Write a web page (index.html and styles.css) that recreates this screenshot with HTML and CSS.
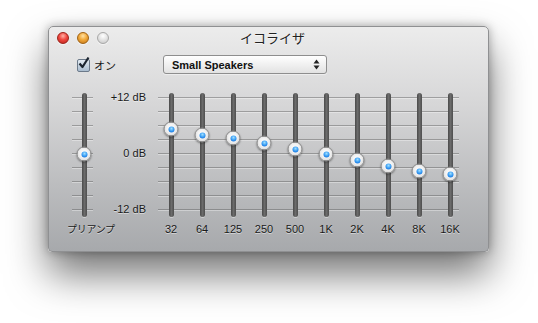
FILE: index.html
```html
<!DOCTYPE html>
<html lang="ja">
  <head>
    <meta charset="UTF-8" />
    <title>イコライザ</title>
    <link rel="stylesheet" href="styles.css">
  </head>
  <body>
    <div class="window">
      <div class="titlebar">
        <div class="lights">
          <span class="light close"></span>
          <span class="light minimize"></span>
          <span class="light zoom"></span>
        </div>
        <div class="title">イコライザ</div>
        <div></div>
      </div>

      <div class="controls">
        <label class="toggle">
          <span class="checkbox">
            <svg width="13" height="13" viewBox="0 0 13 13">
              <path d="M2.5 6.5 L5.5 10 L11.5 0.5" fill="none" stroke="#1c2530" stroke-width="2.2" stroke-linejoin="round" />
            </svg>
          </span>
          オン
        </label>
        <div class="popup">
          <span>Small Speakers</span>
          <svg width="7" height="11" viewBox="0 0 7 11">
            <path d="M3.5 0.5 L6.5 4.5 L0.5 4.5 Z" fill="#222" />
            <path d="M3.5 10.5 L6.5 6.5 L0.5 6.5 Z" fill="#222" />
          </svg>
        </div>
      </div>

      <div class="eq">
        <div class="preamp lines">
          <div class="track"><span class="knob" style="top: 61px"></span></div>
        </div>
        <div class="scale">
          <span>+12 dB</span>
          <span>0 dB</span>
          <span>-12 dB</span>
        </div>
        <div class="bands lines">
          <div class="band"><div class="track"><span class="knob" style="top: 36px"></span></div></div>
          <div class="band"><div class="track"><span class="knob" style="top: 42px"></span></div></div>
          <div class="band"><div class="track"><span class="knob" style="top: 45px"></span></div></div>
          <div class="band"><div class="track"><span class="knob" style="top: 50px"></span></div></div>
          <div class="band"><div class="track"><span class="knob" style="top: 56px"></span></div></div>
          <div class="band"><div class="track"><span class="knob" style="top: 61px"></span></div></div>
          <div class="band"><div class="track"><span class="knob" style="top: 67px"></span></div></div>
          <div class="band"><div class="track"><span class="knob" style="top: 73px"></span></div></div>
          <div class="band"><div class="track"><span class="knob" style="top: 78px"></span></div></div>
          <div class="band"><div class="track"><span class="knob" style="top: 81px"></span></div></div>
        </div>

        <div class="preamp-label">プリアンプ</div>
        <div></div>
        <div class="band-labels">
          <span>32</span>
          <span>64</span>
          <span>125</span>
          <span>250</span>
          <span>500</span>
          <span>1K</span>
          <span>2K</span>
          <span>4K</span>
          <span>8K</span>
          <span>16K</span>
        </div>
      </div>
    </div>
  </body>
</html>
```

FILE: styles.css
```css
* {
  box-sizing: border-box;
}
html,
body {
  height: 100%;
}
body {
  margin: 0;
  padding: 26px 0 0 48px;
  background: #ffffff;
  font-family: "Liberation Sans", "Noto Sans CJK JP", sans-serif;
  font-size: 11px;
  color: #1a1a1a;
}
.window {
  width: 441px;
  height: 226px;
  border: 1px solid #8f9092;
  border-radius: 5px 5px 4px 4px;
  background: linear-gradient(to bottom, #ececec 0%, #d6d6d7 35%, #bcbdbf 70%, #a7a9ac 100%);
  box-shadow: 0 22px 40px rgba(0, 0, 0, 0.55), 0 0 10px rgba(0, 0, 0, 0.3);
}
.titlebar {
  display: grid;
  grid-template-columns: 1fr auto 1fr;
  height: 22px;
  padding: 5px 0 0 8px;
}
.lights {
  display: flex;
  gap: 8px;
}
.light {
  width: 12px;
  height: 12px;
  border-radius: 50%;
  box-shadow: 0 1px 1px rgba(255, 255, 255, 0.6);
}
.light.close {
  background: radial-gradient(circle at 50% 30%, #ffb3a8 0%, #f0473f 45%, #b8231b 100%);
  border: 1px solid #9c2018;
}
.light.minimize {
  background: radial-gradient(circle at 50% 30%, #ffe2a6 0%, #f1a93a 45%, #c17419 100%);
  border: 1px solid #a06212;
}
.light.zoom {
  background: radial-gradient(circle at 50% 30%, #ffffff 0%, #e2e2e2 50%, #c4c4c4 100%);
  border: 1px solid #a8a8a8;
}
.title {
  font-family: "Noto Sans CJK JP", sans-serif;
  font-size: 13px;
  line-height: 22px;
  margin-top: -5px;
  color: #222;
  text-shadow: 0 1px rgba(255, 255, 255, 0.6);
}
.controls {
  display: flex;
  align-items: center;
  height: 19px;
  margin-top: 6px;
  padding-left: 28px;
}
.toggle {
  display: flex;
  align-items: center;
  gap: 4px;
  width: 86px;
  font-family: "Noto Sans CJK JP", sans-serif;
  font-size: 11px;
}
.checkbox {
  width: 13px;
  height: 13px;
  margin-top: 2px;
  border: 1px solid #6c7a8a;
  border-radius: 2px;
  background: linear-gradient(to bottom, #e3ebf3, #a9bccf);
}
.checkbox svg {
  display: block;
  margin: -3px 0 0 -1px;
  overflow: visible;
}
.popup {
  display: flex;
  align-items: center;
  justify-content: space-between;
  width: 164px;
  height: 19px;
  padding: 0 6px 0 8px;
  border: 1px solid #8e8e8e;
  border-radius: 3px;
  background: linear-gradient(to bottom, #ffffff, #e2e2e2);
  box-shadow: 0 1px 1px rgba(255, 255, 255, 0.5);
  font-weight: bold;
  font-size: 11px;
  color: #111;
}
.eq {
  display: grid;
  grid-template-columns: 22px 52px 320px;
  grid-template-rows: 124px auto;
  margin-top: 19px;
  padding-left: 23px;
}
.lines {
  background-image: repeating-linear-gradient(to bottom,
    transparent 0 4px,
    rgba(90, 90, 90, 0.45) 4px 5px,
    rgba(255, 255, 255, 0.35) 5px 6px,
    transparent 6px 14px);
  background-repeat: no-repeat;
}
.preamp {
  display: flex;
  justify-content: center;
  padding-left: 2px;
  background-size: 21px 124px;
  background-position: 0 0;
}
.bands {
  display: flex;
  margin-left: 9.5px;
  background-size: 301px 124px;
  background-position: 2.5px 0;
}
.band {
  flex: none;
  width: 31px;
  display: flex;
  justify-content: center;
}
.track {
  position: relative;
  width: 5px;
  height: 124px;
  border-radius: 3px;
  background: linear-gradient(to right, #4a4a4a, #6b6b6b 50%, #4e4e4e);
  box-shadow: 0 1px 0 rgba(255, 255, 255, 0.4);
}
.knob {
  position: absolute;
  left: 50%;
  width: 15px;
  height: 15px;
  transform: translate(-50%, -50%);
  border-radius: 50%;
  background: radial-gradient(circle at 50% 45%, #ffffff 0%, #f2f2f2 45%, #c9c9c9 100%);
  border: 1px solid #8a8a8a;
  box-shadow: 0 1px 2px rgba(0, 0, 0, 0.4);
}
.knob::after {
  content: "";
  position: absolute;
  left: 50%;
  top: 50%;
  width: 6px;
  height: 6px;
  transform: translate(-50%, -50%);
  border-radius: 50%;
  background: radial-gradient(circle at 50% 35%, #9fe0ff 0%, #2f95f2 55%, #1561c8 100%);
}
.scale {
  display: flex;
  flex-direction: column;
  justify-content: space-between;
  align-items: flex-end;
  height: 124px;
  margin-top: -2px;
  line-height: 12px;
  font-size: 11px;
  color: #1a1a1a;
  text-shadow: 0 1px rgba(255, 255, 255, 0.5);
}
.preamp-label {
  margin-left: -5px;
  margin-top: 5px;
  white-space: nowrap;
  font-family: "Noto Sans CJK JP", sans-serif;
  font-size: 10px;
  line-height: 13px;
  letter-spacing: -0.3px;
  text-shadow: 0 1px rgba(255, 255, 255, 0.5);
}
.band-labels {
  display: flex;
  margin-left: 9.5px;
  margin-top: 6px;
  line-height: 13px;
  text-shadow: 0 1px rgba(255, 255, 255, 0.5);
}
.band-labels span {
  flex: none;
  width: 31px;
  text-align: center;
}
```
